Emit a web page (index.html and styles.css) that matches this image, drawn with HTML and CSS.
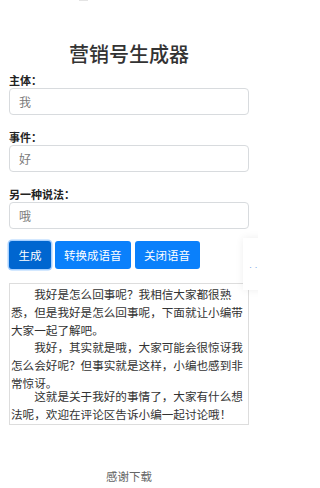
FILE: index.html
```html
<!DOCTYPE html>
<html lang="zh-CN">
<head>
<meta charset="utf-8">
<title>营销号生成器</title>
<link rel="stylesheet" href="styles.css">
</head>
<body>
<div class="status-peek"></div>
<main class="page">
  <h1 class="title">营销号生成器</h1>
  <div class="group">
    <label class="label">主体：</label>
    <div class="input">我</div>
  </div>
  <div class="group">
    <label class="label">事件：</label>
    <div class="input">好</div>
  </div>
  <div class="group">
    <label class="label">另一种说法：</label>
    <div class="input">哦</div>
  </div>
  <div class="buttons">
    <button class="btn btn-active">生成</button>
    <button class="btn">转换成语音</button>
    <button class="btn">关闭语音</button>
  </div>
  <div class="output">
    <p class="para">我好是怎么回事呢？我相信大家都很熟悉，但是我好是怎么回事呢，下面就让小编带大家一起了解吧。</p>
    <p class="para">我好，其实就是哦，大家可能会很惊讶我怎么会好呢？但事实就是这样，小编也感到非常惊讶。</p>
    <p class="para para-last">这就是关于我好的事情了，大家有什么想法呢，欢迎在评论区告诉小编一起讨论哦！</p>
  </div>
  <footer class="footer">感谢下载</footer>
</main>
<div class="float-card"><span class="float-text">·····</span></div>
</body>
</html>
```

FILE: styles.css
```css
html, body {
  margin: 0;
  padding: 0;
  background: #ffffff;
}
body {
  font-family: "Noto Sans CJK SC", "Noto Sans", sans-serif;
  color: #333333;
  position: relative;
  width: 258px;
  height: 488px;
  overflow: hidden;
}
.page {
  padding: 40px 9px 0 9px;
  display: flex;
  flex-direction: column;
}
.title {
  margin: 0 0 5px 0;
  font-size: 20px;
  line-height: 28px;
  font-weight: 500;
  text-align: center;
  color: #333333;
}
.group {
  display: flex;
  flex-direction: column;
}
.group + .group {
  margin-top: 15px;
}
.label {
  font-size: 11px;
  line-height: 15px;
  font-weight: 700;
  color: #222222;
}
.input {
  box-sizing: border-box;
  height: 27px;
  border: 1px solid #d8dbde;
  border-radius: 4px;
  padding: 0 9px;
  font-size: 12px;
  line-height: 25px;
  color: #7a7a7a;
  background: #ffffff;
}
.buttons {
  display: flex;
  gap: 3.5px;
  margin-top: 12px;
}
.btn {
  box-sizing: border-box;
  height: 28px;
  padding: 0 9.5px;
  border: none;
  border-radius: 3px;
  background: #0a80fb;
  color: #ffffff;
  font-family: "Noto Sans CJK SC", "Noto Sans", sans-serif;
  font-size: 11.5px;
  line-height: 28px;
}
.btn-active {
  background: #0066d0;
  box-shadow: 0 0 0 1.5px rgba(60, 150, 255, 0.45);
}
.output {
  box-sizing: border-box;
  height: 142px;
  margin-top: 14px;
  border: 1px solid #dddddd;
  padding: 2px 1px;
  overflow: hidden;
  font-size: 11.6px;
  line-height: 17.8px;
  color: #333333;
}
.para {
  margin: 0;
  text-indent: 2em;
}
.para-last {
  margin-top: -4.4px;
}
.footer {
  margin-top: 43px;
  text-align: center;
  font-size: 11.5px;
  line-height: 16px;
  color: #666666;
}
.status-peek {
  position: absolute;
  left: 79px;
  top: 0;
  width: 9px;
  height: 1px;
  background: #e4e4e4;
}
.float-card {
  position: absolute;
  left: 243px;
  top: 238px;
  width: 40px;
  height: 52px;
  background: #ffffff;
  box-shadow: 0 0 8px rgba(0, 0, 0, 0.07);
}
.float-text {
  position: absolute;
  left: 5px;
  top: 26px;
  font-size: 5px;
  line-height: 6px;
  color: #7aa6e6;
  letter-spacing: 0.5px;
}
```
